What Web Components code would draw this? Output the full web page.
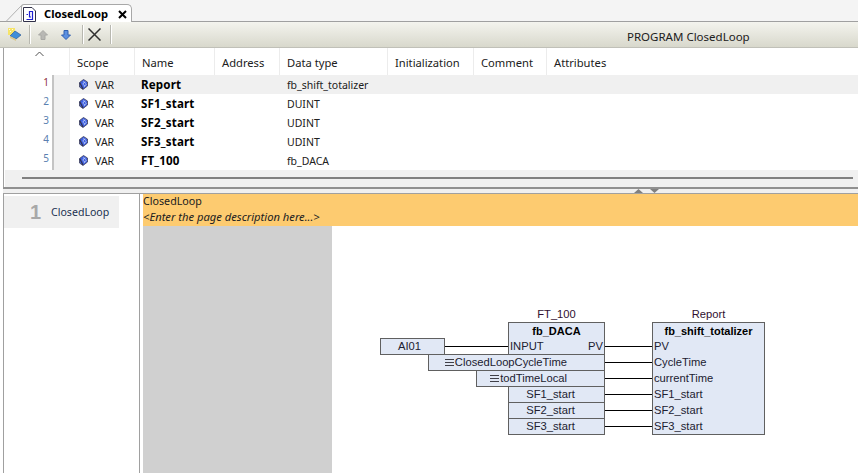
<!DOCTYPE html>
<html>
<head>
<meta charset="utf-8">
<title>ClosedLoop</title>
<style>
    html, body { margin: 0; padding: 0; background: #fff; }
    body { width: 858px; height: 473px; overflow: hidden; font-family: "Noto Sans", sans-serif; display: flex; flex-direction: column; }
</style>
</head>
<body>
<tab-strip label="ClosedLoop"></tab-strip>
<tool-bar title-text="PROGRAM ClosedLoop"></tool-bar>
<var-table>
    <var-row num="1" name="Report" type="fb_shift_totalizer" active></var-row>
    <var-row num="2" name="SF1_start" type="DUINT"></var-row>
    <var-row num="3" name="SF2_start" type="UDINT"></var-row>
    <var-row num="4" name="SF3_start" type="UDINT"></var-row>
    <var-row num="5" name="FT_100" type="fb_DACA"></var-row>
</var-table>
<split-bar></split-bar>
<fbd-editor>
    <fbd-box slot="canvas" style="--x:380px;--y:338px;--w:65px;--h:16px;--shift:6px"><span>AI01</span></fbd-box>
    <fbd-box slot="canvas" style="--x:428px;--y:354px;--w:177px;--h:16px" constant>ClosedLoopCycleTime</fbd-box>
    <fbd-box slot="canvas" style="--x:476px;--y:370px;--w:129px;--h:16px" constant>todTimeLocal</fbd-box>
    <fbd-box slot="canvas" style="--x:508px;--y:386px;--w:97px;--h:16px;--shift:12px"><span>SF1_start</span></fbd-box>
    <fbd-box slot="canvas" style="--x:508px;--y:402px;--w:97px;--h:16px;--shift:12px"><span>SF2_start</span></fbd-box>
    <fbd-box slot="canvas" style="--x:508px;--y:418px;--w:97px;--h:16px;--shift:12px"><span>SF3_start</span></fbd-box>
    <fbd-block slot="canvas" style="--x:508px;--y:306px;--w:97px;--h:32px" instance="FT_100" type="fb_DACA">
        <span slot="in">INPUT</span>
        <span slot="out">PV</span>
    </fbd-block>
    <fbd-block slot="canvas" style="--x:652px;--y:306px;--w:113px;--h:112px" instance="Report" type="fb_shift_totalizer">
        <span slot="in">PV</span>
        <span slot="in">CycleTime</span>
        <span slot="in">currentTime</span>
        <span slot="in">SF1_start</span>
        <span slot="in">SF2_start</span>
        <span slot="in">SF3_start</span>
    </fbd-block>
</fbd-editor>
<script>
class TabStrip extends HTMLElement {
    constructor() {
        super();
        this.attachShadow({ mode: 'open' });
    }
    connectedCallback() {
        const label = this.getAttribute('label') || '';
        this.shadowRoot.innerHTML = `
            <style>
                :host { display: flex; height: 22px; background: #f4f4f4; border-bottom: 1px solid #a0a0a0; box-sizing: border-box; padding: 4px 0 0 21px; flex: none; }
                .tab { height: 18px; width: 111px; box-sizing: border-box; background: #fff; border: 1px solid #a8a8a8; border-bottom: none; border-radius: 3px 5px 0 0; display: flex; align-items: center; gap: 8px; padding-left: 1px; position: relative; }
                .slant { position: absolute; left: -16px; top: 0; }
                svg.doc { flex: none; margin-top: 1px; }
                .txt { font-weight: 700; font-size: 11.2px; color: #000; margin-top: -1px; }
                .x { margin-left: 2px; margin-top: 2px; flex: none; }
            </style>
            <div class="tab">
                <svg class="slant" width="16" height="17" viewBox="0 0 16 17"><path d="M0 16.5L15.5 0.5" stroke="#b0b0b0" fill="none"/></svg>
                <svg class="doc" width="13" height="15" viewBox="0 0 13 15">
                    <path d="M0.5 .5H9L12.5 4V14.5H0.5Z" fill="#fff" stroke="#303048"/>
                    <path d="M3.5 12.5H9.5V4.5H6.5V10H8" fill="none" stroke="#2020d0" stroke-width="1.2"/>
                    <path d="M3.5 7.5H5" stroke="#2020d0"/>
                </svg>
                <span class="txt">${label}</span>
                <svg class="x" width="9" height="9" viewBox="0 0 9 9"><path d="M1 1L8 8M8 1L1 8" stroke="#000" stroke-width="2"/></svg>
            </div>
        `;
    }
}
customElements.define('tab-strip', TabStrip);

class ToolBar extends HTMLElement {
    constructor() {
        super();
        this.attachShadow({ mode: 'open' });
    }
    connectedCallback() {
        const t = this.getAttribute('title-text') || '';
        this.shadowRoot.innerHTML = `
            <style>
                :host { display: flex; align-items: center; height: 26px; flex: none; box-sizing: border-box; background: linear-gradient(#f4f4ee, #d8d8cc); border-bottom: 1px solid #c0c0b8; position: relative; }
                .sep { width: 1px; height: 19px; background: #b8b8b0; border-right: 1px solid #fff; flex: none; }
                svg { flex: none; }
                .title { position: absolute; left: 627px; top: 7px; font-size: 11.5px; color: #202020; }
            </style>
            <svg style="margin-left:7px" width="15" height="15" viewBox="0 0 15 15">
                <path d="M1 1h7v7h-7z" fill="#f6e468"/>
                <path d="M2 2h1v1h-1zM5 2h1v1h-1zM3 4h1v1h-1zM6 5h1v1h-1z" fill="#fffbe0"/>
                <path d="M3 9L9 12L14 8L8 4Z" fill="#3f8ed8" stroke="#2a5a98" stroke-width=".7"/>
                <path d="M3 9L3 11L9 14L9 12Z" fill="#d8c890"/>
            </svg>
            <div class="sep" style="margin-left:7px"></div>
            <svg style="margin-left:7px" width="10" height="10" viewBox="0 0 10 10"><path d="M5 .5L9.5 5H7V9.5H3V5H.5Z" fill="#b8b8b4" stroke="#a8a8a4"/></svg>
            <svg style="margin-left:13px" width="10" height="10" viewBox="0 0 10 10"><path d="M5 9.5L9.5 5H7V.5H3V5H.5Z" fill="#5c90e0" stroke="#3060b0"/></svg>
            <div class="sep" style="margin-left:11px"></div>
            <svg style="margin-left:4px" width="13" height="13" viewBox="0 0 13 13"><path d="M.5 .5L12.5 12.5M12.5 .5L.5 12.5" stroke="#303030" stroke-width="1.5"/></svg>
            <div class="sep" style="margin-left:9px"></div>
            <span class="title">${t}</span>
        `;
    }
}
customElements.define('tool-bar', ToolBar);

class VarTable extends HTMLElement {
    constructor() {
        super();
        this.attachShadow({ mode: 'open' });
    }
    connectedCallback() {
        this.shadowRoot.innerHTML = `
            <style>
                :host { display: block; flex: none; height: 139px; box-sizing: border-box; border-left: 1px solid #a0a0a0; margin-left: 3px; font-size: 11.2px; color: #202020; position: relative; }
                .head { display: grid; grid-template-columns: 65px 65px 80px 65px 108px 86px 73px 1fr; height: 27px; align-items: center; }
                .head span { height: 100%; display: flex; align-items: center; padding: 2px 0 0 7px; box-sizing: border-box; border-left: 1px solid #ececec; }
                .head span:first-child { border-left: none; padding-left: 31px; }
                .caret { margin-top: -18px; }
                .rows { display: block; }
                .scroll { position: absolute; left: 1px; right: 0; top: 122px; height: 17px; background: #f0f0f0; }
                .scroll div { height: 2px; margin: 7px 5px 0 17px; background: #808080; }
            </style>
            <div class="head">
                <span><svg class="caret" width="9" height="6" viewBox="0 0 9 6"><path d="M.5 5L4.5 1L8.5 5" fill="none" stroke="#505050"/></svg></span>
                <span>Scope</span><span>Name</span><span>Address</span><span>Data type</span><span>Initialization</span><span>Comment</span><span>Attributes</span>
            </div>
            <div class="rows"><slot></slot></div>
            <div class="scroll"><div></div></div>
        `;
    }
}
customElements.define('var-table', VarTable);

class VarRow extends HTMLElement {
    constructor() {
        super();
        this.attachShadow({ mode: 'open' });
    }
    connectedCallback() {
        const num = this.getAttribute('num') || '';
        const name = this.getAttribute('name') || '';
        const type = this.getAttribute('type') || '';
        const bg = this.hasAttribute('active') ? '#f0f0f0' : '#fff';
        const numColor = this.hasAttribute('active') ? '#903040' : '#5a80b0';
        this.shadowRoot.innerHTML = `
            <style>
                :host { display: grid; grid-template-columns: 48px 2px 16px 66px 146px 1fr; height: 19px; align-items: center; font-size: 10.5px; }
                .num { text-align: right; padding-right: 3px; font-size: 10px; color: ${numColor}; margin-top: -5px; }
                .bar { background: #c4c4c4; height: 100%; }
                .gut { background: #f0f0f0; height: 100%; }
                .scope, .name, .type { background: ${bg}; height: 100%; display: flex; align-items: center; }
                .scope { gap: 7px; padding-left: 9px; }
                .name { font-weight: 700; font-size: 11.6px; padding-left: 5px; color: #000; letter-spacing: .15px; }
                .type { padding-left: 5px; }
            </style>
            <span class="num">${num}</span>
            <span class="bar"></span>
            <span class="gut"></span>
            <span class="scope">
                <svg width="9" height="11" viewBox="0 0 9 11">
                    <path d="M4.5 .5L8.5 3V7L4 10.5L.5 8V3.5Z" fill="#3f5fe0" stroke="#404058" stroke-width=".8"/>
                    <path d="M.8 3.8L4 10" stroke="#30304a" stroke-width="1.2"/>
                    <path d="M4 2.5L7 4.5M3.5 5L6 7M6 2.5L4 5M7.5 5L5 8" stroke="#c8d8f8" stroke-width=".7"/>
                </svg>
                <span>VAR</span>
            </span>
            <span class="name">${name}</span>
            <span class="type">${type}</span>
        `;
    }
}
customElements.define('var-row', VarRow);

class SplitBar extends HTMLElement {
    constructor() {
        super();
        this.attachShadow({ mode: 'open' });
    }
    connectedCallback() {
        this.shadowRoot.innerHTML = `
            <style>
                :host { display: block; flex: none; height: 7px; box-sizing: border-box; margin-left: 3px; background: #f0f0f0; border-top: 2px solid #909090; border-bottom: 1px solid #a0a0a0; position: relative; }
                svg { position: absolute; top: 0; left: 631px; }
            </style>
            <svg width="26" height="4" viewBox="0 0 26 4">
                <path d="M0 4L4.5 0L9 4Z" fill="#808080"/>
                <path d="M16 0H25L20.5 4Z" fill="#808080"/>
            </svg>
        `;
    }
}
customElements.define('split-bar', SplitBar);

class FbdEditor extends HTMLElement {
    constructor() {
        super();
        this.attachShadow({ mode: 'open' });
    }
    connectedCallback() {
        // wire y values are page coordinates, the editor starts at y=194
        const wires = [[445, 508, 346], [605, 652, 346], [605, 652, 362], [605, 652, 378], [605, 652, 394], [605, 652, 410], [605, 652, 426]]
            .map(w => `<path d="M${w[0]} ${w[2] + 0.5}H${w[1]}"/>`).join('');
        this.shadowRoot.innerHTML = `
            <style>
                :host { display: flex; flex: 1; min-height: 0; position: relative; }
                .pages { flex: none; box-sizing: border-box; border-right: 1px solid #a0a0a0; border-left: 1px solid #a0a0a0; margin-left: 3px; width: 137px; padding-top: 2px; }
                .page { width: 115px; height: 32px; background: #f0f0f0; display: flex; align-items: center; font-size: 10.6px; color: #203050; }
                .page b { width: 47px; text-align: right; padding-right: 10px; box-sizing: border-box; font-size: 20px; color: #a8a8a8; font-family: "Liberation Sans", sans-serif; }
                .main { flex: 1; display: flex; flex-direction: column; padding-left: 3px; min-width: 0; }
                .desc { height: 32px; flex: none; background: #fdcb70; font-size: 10.7px; color: #202020; line-height: 15px; box-sizing: border-box; }
                .desc i { display: block; font-size: 11.2px; }
                .grey { flex: 1; width: 189px; background: #d0d0d0; }
                .wires { position: absolute; left: 0; top: -194px; }
                .canvas { position: absolute; left: 0; top: 0; }
            </style>
            <div class="pages"><div class="page"><b>1</b>ClosedLoop</div></div>
            <div class="main">
                <div class="desc">ClosedLoop<i>&lt;Enter the page description here...&gt;</i></div>
                <div class="grey"></div>
            </div>
            <svg class="wires" width="858" height="473" fill="none" stroke="#000">${wires}</svg>
            <div class="canvas"><slot name="canvas"></slot></div>
        `;
    }
}
customElements.define('fbd-editor', FbdEditor);

class FbdBox extends HTMLElement {
    constructor() {
        super();
        this.attachShadow({ mode: 'open' });
    }
    connectedCallback() {
        const constant = this.hasAttribute('constant');
        const mark = constant ? '<svg width="9" height="7" viewBox="0 0 9 7"><path d="M0 .5H9M0 3.5H9M0 6.5H9" stroke="#404048"/></svg>' : '';
        this.shadowRoot.innerHTML = `
            <style>
                :host { display: flex; position: absolute; left: var(--x); top: calc(var(--y) - 194px); width: var(--w); height: calc(var(--h) + 1px); box-sizing: border-box; background: #e1e8f5; border: 1px solid #606060; align-items: center; justify-content: ${constant ? 'flex-end' : 'center'}; font: 11.2px "Liberation Sans", sans-serif; color: #202030; padding: 0 ${constant ? '37px' : 'var(--shift, 0px)'} 2px 0; white-space: nowrap; }
                svg { margin: 2px 1px 0 0; }
            </style>
            ${mark}<slot></slot>
        `;
    }
}
customElements.define('fbd-box', FbdBox);

class FbdBlock extends HTMLElement {
    constructor() {
        super();
        this.attachShadow({ mode: 'open' });
    }
    connectedCallback() {
        const inst = this.getAttribute('instance') || '';
        const type = this.getAttribute('type') || '';
        this.shadowRoot.innerHTML = `
            <style>
                :host { display: block; position: absolute; left: var(--x); top: calc(var(--y) - 194px); width: var(--w); font: 11.2px/16px "Liberation Sans", sans-serif; color: #202030; }
                .inst { text-align: center; height: 16px; color: #301030; }
                .body { box-sizing: border-box; height: calc(var(--h) + 1px); background: #e1e8f5; border: 1px solid #606060; }
                .type { text-align: center; font-weight: 700; font-size: 11px; color: #000; height: 15px; }
                .pins { display: flex; justify-content: space-between; padding: 0 1px; }
                .col { display: flex; flex-direction: column; }
                ::slotted(span) { display: block; height: 16px; }
            </style>
            <div class="inst">${inst}</div>
            <div class="body">
                <div class="type">${type}</div>
                <div class="pins">
                    <div class="col"><slot name="in"></slot></div>
                    <div class="col"><slot name="out"></slot></div>
                </div>
            </div>
        `;
    }
}
customElements.define('fbd-block', FbdBlock);
</script>
</body>
</html>
